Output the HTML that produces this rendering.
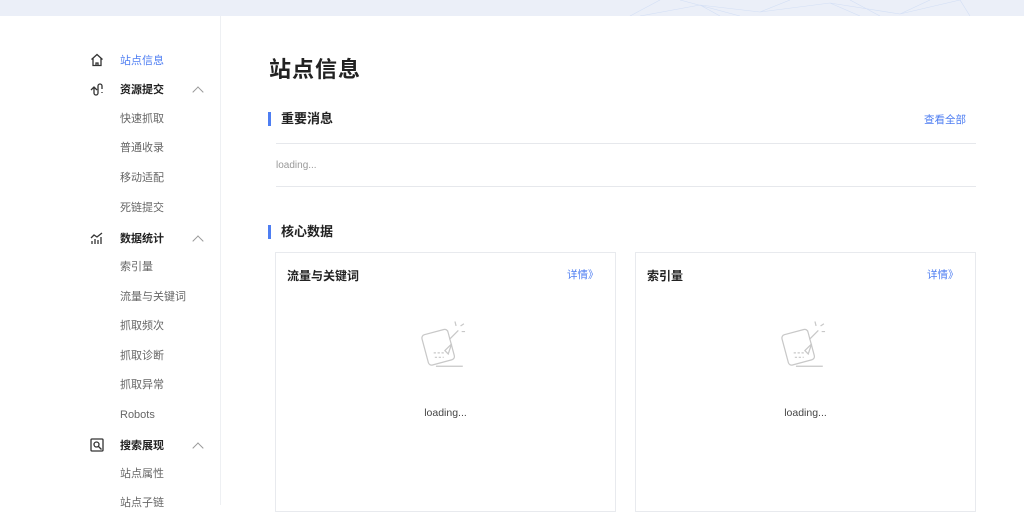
<!DOCTYPE html>
<html><head><meta charset="utf-8"><style>
*{margin:0;padding:0;box-sizing:border-box}
body{width:1024px;height:505px;overflow:hidden;background:#fff;font-family:"Liberation Sans","Noto Sans CJK SC",sans-serif;position:relative}
.top{position:absolute;left:0;top:0;width:1024px;height:16px;background:#ebeff8}
.side{position:absolute;left:0;top:16px;width:221px;height:489px;border-right:1px solid #eef0f3}
.it{position:absolute;left:120px;font-size:11px;color:#666;line-height:14px;margin-top:1px}
.it.h{color:#222;font-weight:bold}
.it.a{color:#4e7ef2}
.ic{position:absolute;left:90px}
.ar{position:absolute;left:194px;width:8px;height:8px;border-left:1.2px solid #999;border-top:1.2px solid #999;transform:rotate(45deg);margin-top:1px}
.t{position:absolute;left:269px;top:52px;font-size:22px;font-weight:bold;color:#222;letter-spacing:1px}
.sec{position:absolute;left:268px;font-size:13px;font-weight:bold;color:#222;padding-left:13px;line-height:14px;margin-top:1px}
.sec:before{content:"";position:absolute;left:0;top:0;width:3px;height:14px;background:#4e7ef2}
.blue{position:absolute;color:#4e7ef2;font-size:10.5px;margin-top:1px}
.line{position:absolute;left:276px;width:700px;height:1px;background:#e6e8ec}
.card{position:absolute;top:252px;width:341px;height:260px;border:1px solid #e8eaee}
.card .n{position:absolute;left:11px;top:14px;font-size:12px;font-weight:bold;color:#222}
.card .d{position:absolute;left:291px;top:14px;font-size:10.5px;color:#4e7ef2}
.card .l{position:absolute;left:0;width:100%;top:154px;text-align:center;font-size:10.5px;color:#444}
.card svg{position:absolute;left:142px;top:64px}
</style></head><body>
<div class="top"><svg width="1024" height="16" style="position:absolute;left:0;top:0"><g stroke="#d3dff5" stroke-width="0.6" fill="none"><path d="M630 16L660 0M640 16L700 5L760 12L830 3L900 14L960 0M700 5L720 16M760 12L790 0M830 3L860 16M900 14L930 0M960 0L970 16M680 0L740 16M850 0L880 16"/></g></svg></div>
<div class="side"></div>
<svg class="ic" style="top:53px" width="14" height="14" viewBox="0 0 14 14"><path d="M1.5 6.5L7 1.5l5.5 5M3 5.5V12.5h8V5.5M6 12.5V10h2v2.5" fill="none" stroke="#333" stroke-width="1.3"/></svg>
<div class="it a" style="top:53px">站点信息</div>
<svg class="ic" style="top:82px" width="14" height="14" viewBox="0 0 14 14"><path d="M1 8l3-3 3 3M4 5v6a2 2 0 0 0 4 0V4a2 2 0 0 1 4 0v3M12 10v1" fill="none" stroke="#333" stroke-width="1.3"/></svg>
<div class="it h" style="top:82px">资源提交</div><div class="ar" style="top:87px"></div>
<div class="it" style="top:111px">快速抓取</div>
<div class="it" style="top:140px">普通收录</div>
<div class="it" style="top:170px">移动适配</div>
<div class="it" style="top:200px">死链提交</div>
<svg class="ic" style="top:231px" width="14" height="14" viewBox="0 0 14 14"><path d="M1 7l3-3 3 2 5-4M2 13V10M5 13V8M8 13V9M11 13V6" fill="none" stroke="#333" stroke-width="1.3"/></svg>
<div class="it h" style="top:231px">数据统计</div><div class="ar" style="top:236px"></div>
<div class="it" style="top:259px">索引量</div>
<div class="it" style="top:289px">流量与关键词</div>
<div class="it" style="top:318px">抓取频次</div>
<div class="it" style="top:348px">抓取诊断</div>
<div class="it" style="top:377px">抓取异常</div>
<div class="it" style="top:407px">Robots</div>
<svg class="ic" style="top:438px" width="14" height="14" viewBox="0 0 14 14"><rect x="1" y="1" width="12" height="12" rx="1" fill="none" stroke="#333" stroke-width="1.3"/><circle cx="6.5" cy="6.5" r="2.5" fill="none" stroke="#333" stroke-width="1.3"/><path d="M8.5 8.5l3 3" stroke="#333" stroke-width="1.3"/></svg>
<div class="it h" style="top:438px">搜索展现</div><div class="ar" style="top:443px"></div>
<div class="it" style="top:466px">站点属性</div>
<div class="it" style="top:495px">站点子链</div>
<div class="t">站点信息</div>
<div class="sec" style="top:111px">重要消息</div>
<div class="blue" style="left:924px;top:111px">查看全部</div>
<div class="line" style="top:143px"></div>
<div style="position:absolute;left:276px;top:160px;font-size:10px;color:#999">loading...</div>
<div class="line" style="top:186px"></div>
<div class="sec" style="top:224px">核心数据</div>
<div class="card" style="left:275px"><div class="n">流量与关键词</div><div class="d">详情》</div>
<svg width="56" height="56" viewBox="0 0 50 50"><g fill="none" stroke="#c8c8c8" stroke-width="1.1"><rect x="6" y="13" width="24" height="28" rx="3" transform="rotate(-15 18 27)"/><path d="M28 20l8-8M24 30l6-6-3 9z"/><path d="M14 32h10M15 36h8" stroke-dasharray="2 1.5"/><path d="M16 44h24M33 4l1 4M38 8l3-2M39 13l3 0"/></g></svg>
<div class="l">loading...</div></div>
<div class="card" style="left:635px"><div class="n">索引量</div><div class="d">详情》</div>
<svg width="56" height="56" viewBox="0 0 50 50"><g fill="none" stroke="#c8c8c8" stroke-width="1.1"><rect x="6" y="13" width="24" height="28" rx="3" transform="rotate(-15 18 27)"/><path d="M28 20l8-8M24 30l6-6-3 9z"/><path d="M14 32h10M15 36h8" stroke-dasharray="2 1.5"/><path d="M16 44h24M33 4l1 4M38 8l3-2M39 13l3 0"/></g></svg>
<div class="l">loading...</div></div>
</body></html>
